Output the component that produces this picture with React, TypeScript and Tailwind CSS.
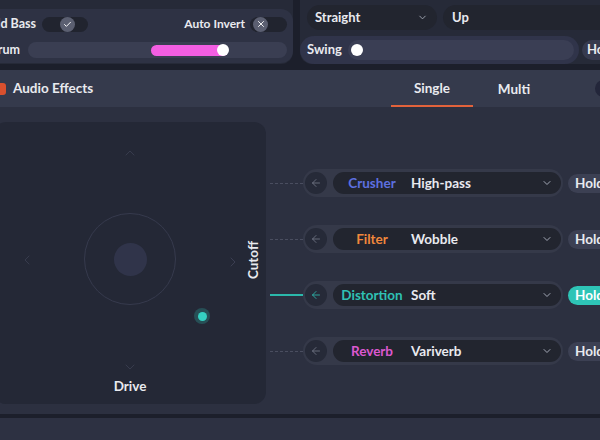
import { Check, X, ChevronDown, ChevronUp, ChevronLeft, ChevronRight, ArrowLeft } from "lucide-react";

const effects = [
  { name: "Crusher", value: "High-pass", color: "text-[#5d70e0]", active: false },
  { name: "Filter", value: "Wobble", color: "text-[#f0883c]", active: false },
  { name: "Distortion", value: "Soft", color: "text-[#2fc2b5]", active: true },
  { name: "Reverb", value: "Variverb", color: "text-[#dc58cf]", active: false },
];

const EffectRow = ({ name, value, color, active }: (typeof effects)[number]) => (
  <div className="flex items-center h-[28px]">
    {active ? (
      <div className="ml-[4px] w-[33px] h-[1.5px] bg-[#2bb8ab]" />
    ) : (
      <div className="ml-[4px] w-[33px] border-t border-dashed border-[#4a4e60]" />
    )}
    <div className="w-[260px] h-[28px] rounded-full bg-[#353949] flex items-center pl-[2px] pr-[2px]">
      <div className="w-[22px] h-[22px] rounded-full bg-[#262a38] flex items-center justify-center">
        <ArrowLeft size={12} strokeWidth={1.6} className={active ? "text-[#2fc2b5]" : "text-[#767b8c]"} />
      </div>
      <div className="ml-[6px] flex-1 h-[22px] rounded-full bg-[#22252f] flex items-center">
        <span className={`w-[78px] text-center text-[13.5px] font-bold ${color}`}>{name}</span>
        <span className="flex-1 text-[13.5px] font-bold text-[#e9eaef]">{value}</span>
        <ChevronDown size={12} strokeWidth={2} className="mr-[8px] text-[#a3a8b6]" />
      </div>
    </div>
    <div
      className={
        active
          ? "ml-[5px] h-[19px] pl-[7px] pr-[10px] rounded-full bg-[#2ec4b6] text-white text-[13.5px] font-bold flex items-center"
          : "ml-[5px] h-[19px] pl-[7px] pr-[10px] rounded-full bg-[#3c4053] text-[#e9eaef] text-[13.5px] font-bold flex items-center"
      }
    >
      Hold
    </div>
  </div>
);

export default function App() {
  return (
    <div className="w-[600px] h-[440px] overflow-hidden bg-[#1c1f2b] font-['Lato','Liberation_Sans',sans-serif] text-[#e9eaef]">
      {/* top panels */}
      <div className="flex h-[64px] gap-[7px]">
        <div className="-ml-[60px] w-[353px] shrink-0 bg-[#262a38] rounded-b-[12px] pt-[9px]">
          <div className="h-[54px] bg-[#2e3244] rounded-[12px] pt-[8px] pr-[6px]">
            <div className="flex items-center h-[14px]">
              <div className="w-[148px] flex items-center justify-end gap-[6px]">
                <span className="text-[12.5px] font-bold whitespace-nowrap">Build Bass</span>
                <div className="w-[46px] h-[15px] rounded-full bg-[#21242f] flex items-center justify-end pr-[13px]">
                  <div className="w-[15px] h-[15px] rounded-full bg-[#5b5f71] flex items-center justify-center">
                    <Check size={9} strokeWidth={2.5} className="text-white" />
                  </div>
                </div>
              </div>
              <div className="ml-auto flex items-center gap-[5px]">
                <span className="text-[12px] font-bold">Auto Invert</span>
                <div className="w-[37px] h-[15px] rounded-full bg-[#21242f] flex items-center pl-[3px]">
                  <div className="w-[15px] h-[15px] rounded-full bg-[#5b5f71] flex items-center justify-center">
                    <X size={10} strokeWidth={2.2} className="text-white" />
                  </div>
                </div>
              </div>
            </div>
            <div className="flex items-center mt-[10px] gap-[8px]">
              <span className="w-[80px] text-right text-[12.5px] font-bold">Spectrum</span>
              <div className="flex-1 h-[16px] rounded-full bg-[#3a3e52] flex items-center">
                <div className="w-[123px]" />
                <div className="relative w-[77px] h-[11px] rounded-full bg-[#f35ee2]">
                  <div className="absolute right-[-1px] top-[-0.5px] w-[12px] h-[12px] rounded-full bg-white" />
                </div>
              </div>
            </div>
          </div>
        </div>

        <div className="flex-1 bg-[#262a38] rounded-bl-[12px] pl-[7px] pt-[5px]">
          <div className="flex gap-[6px] h-[25px]">
            <div className="w-[130px] rounded-full bg-[#22252f] flex items-center justify-between pl-[8px] pr-[9px]">
              <span className="text-[13px] font-bold">Straight</span>
              <ChevronDown size={11} strokeWidth={2} className="text-[#a3a8b6]" />
            </div>
            <div className="flex-1 -mr-[20px] rounded-full bg-[#22252f] flex items-center pl-[9px]">
              <span className="text-[13px] font-bold">Up</span>
            </div>
          </div>
          <div className="flex items-center mt-[6px]">
            <div className="-ml-[7px] w-[279px] h-[28px] bg-[#30344a] rounded-[14px] pl-[7px] pr-[5px] flex items-center gap-[6px]">
              <span className="text-[13px] font-bold">Swing</span>
              <div className="flex-1 h-[20px] rounded-full bg-[#3a3e54] flex items-center pl-[3px]">
                <div className="w-[12px] h-[12px] rounded-full bg-white" />
              </div>
            </div>
            <div className="ml-[3px] h-[20px] pl-[5px] pr-[10px] rounded-full bg-[#363a4e] text-[13px] font-bold flex items-center">
              Hold
            </div>
          </div>
        </div>
      </div>

      {/* audio effects panel */}
      <div className="mt-[6px] h-[344px] bg-[#2c3040] overflow-hidden">
        <div className="h-[37px] bg-[#353a4c] flex items-center">
          <div className="-ml-[5px] w-[11px] h-[12px] rounded-[3px] bg-[#d9502e]" />
          <span className="ml-[7px] text-[13.5px] font-bold">Audio Effects</span>
          <div className="ml-auto flex h-full">
            <div className="w-[82px] h-full flex items-center justify-center border-b-[2px] border-[#e2623b] pt-[2px]">
              <span className="text-[13.5px] font-bold">Single</span>
            </div>
            <div className="w-[82px] h-full flex items-center justify-center pt-[2px]">
              <span className="text-[13.5px] font-bold">Multi</span>
            </div>
          </div>
          <div className="ml-[40px] -mr-[12px] w-[17px] h-[17px] rounded-full bg-[#23263a]" />
        </div>

        <div className="flex pt-[15px]">
          <div className="-ml-[6px] w-[272px] h-[282px] shrink-0 bg-[#242836] rounded-[12px] relative">
            <ChevronUp size={16} strokeWidth={1.4} className="absolute left-[128px] top-[23px] text-[#393d4f]" />
            <ChevronLeft size={16} strokeWidth={1.4} className="absolute left-[25px] top-[130px] text-[#393d4f]" />
            <ChevronRight size={16} strokeWidth={1.4} className="absolute left-[231px] top-[132px] text-[#3d4154]" />
            <ChevronDown size={16} strokeWidth={1.4} className="absolute left-[128px] top-[237px] text-[#393d4f]" />
            <div className="absolute left-[90px] top-[91px] w-[92px] h-[92px] rounded-full border border-[#363a4d] flex items-center justify-center">
              <div className="w-[33px] h-[33px] rounded-full bg-[#30344a]" />
            </div>
            <div className="absolute left-[200px] top-[186px] w-[16px] h-[16px] rounded-full bg-[#2ec4b6]/25 flex items-center justify-center">
              <div className="w-[9px] h-[9px] rounded-full bg-[#35d0c2]" />
            </div>
            <span className="absolute left-[136px] top-[264px] -translate-x-1/2 -translate-y-1/2 text-[13.5px] font-bold">
              Drive
            </span>
            <span className="absolute left-[259px] top-[138px] -translate-x-1/2 -translate-y-1/2 -rotate-90 text-[13.5px] font-bold">
              Cutoff
            </span>
          </div>

          <div className="flex-1 flex flex-col pt-[47px] gap-[28px]">
            {effects.map((fx) => (
              <EffectRow key={fx.name} {...fx} />
            ))}
          </div>
        </div>
      </div>

      <div className="mt-[4px] h-[40px] bg-[#2d3142]" />
    </div>
  );
}
